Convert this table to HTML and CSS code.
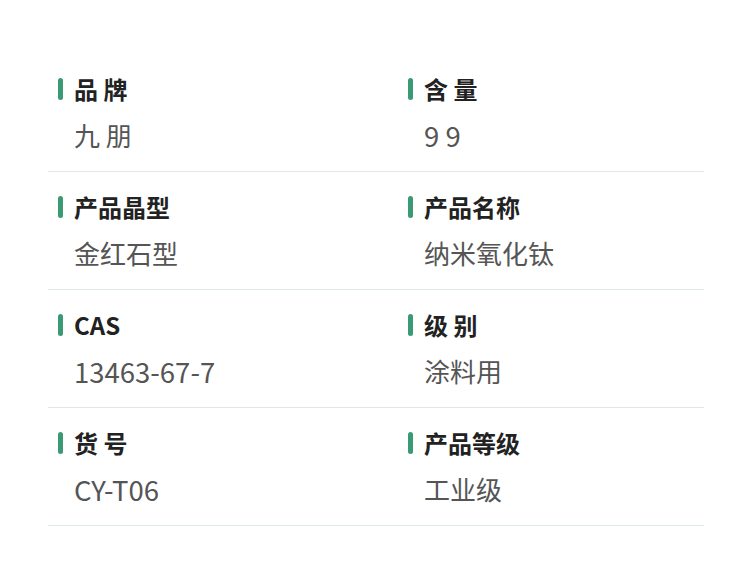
FILE: index.html
```html
<!DOCTYPE html>
<html lang="zh-CN">
<head>
<meta charset="utf-8">
<link rel="stylesheet" href="styles.css">
</head>
<body>
<div class="specs">
  <div class="row">
    <div class="item"><div class="label"><span class="bar"></span>品 牌</div><div class="value">九 朋</div></div>
    <div class="item"><div class="label"><span class="bar"></span>含 量</div><div class="value num">9 9</div></div>
  </div>
  <div class="row">
    <div class="item"><div class="label"><span class="bar"></span>产品晶型</div><div class="value">金红石型</div></div>
    <div class="item"><div class="label"><span class="bar"></span>产品名称</div><div class="value">纳米氧化钛</div></div>
  </div>
  <div class="row">
    <div class="item"><div class="label"><span class="bar"></span>CAS</div><div class="value num">13463-67-7</div></div>
    <div class="item"><div class="label"><span class="bar"></span>级 别</div><div class="value">涂料用</div></div>
  </div>
  <div class="row">
    <div class="item"><div class="label"><span class="bar"></span>货 号</div><div class="value num">CY-T06</div></div>
    <div class="item"><div class="label"><span class="bar"></span>产品等级</div><div class="value">工业级</div></div>
  </div>
</div>
</body>
</html>
```
FILE: styles.css
```css
html, body {
  margin: 0;
  padding: 0;
  background: #fff;
}
body {
  font-family: "Noto Sans CJK SC", "Noto Sans", sans-serif;
}
.specs {
  width: 656px;
  margin-left: 48px;
  padding-top: 54px;
}
.row {
  display: grid;
  grid-template-columns: 350px 1fr;
  padding: 20px 0 18px;
  border-bottom: 1px solid #dfe9e5;
}
.item {
  padding-left: 10px;
}
.label {
  display: flex;
  align-items: center;
  height: 30px;
  font-size: 24px;
  font-weight: 700;
  color: #222;
  line-height: 30px;
}
.bar {
  width: 5px;
  height: 22px;
  border-radius: 3px;
  background: #3a9a74;
  margin-right: 11px;
}
.value {
  margin-top: 13px;
  padding-left: 16px;
  font-size: 26px;
  line-height: 36px;
  height: 36px;
  color: #555;
}
.value.num {
  font-size: 27.5px;
}
```
